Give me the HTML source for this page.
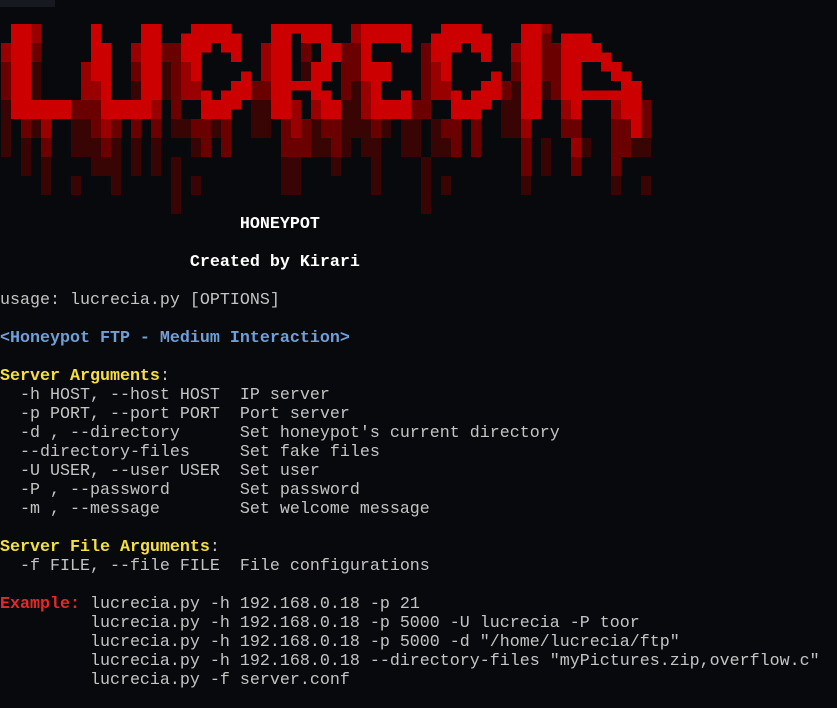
<!DOCTYPE html>
<html><head><meta charset="utf-8">
<style>
html,body{margin:0;padding:0;background:#08090c;width:837px;height:708px;overflow:hidden}
#logo{position:absolute;left:0;top:0}
#txt{position:absolute;left:0;top:215px;margin:0;font-family:"Liberation Mono","DejaVu Sans Mono",monospace;font-size:16.67px;line-height:19px;color:#c4c4c4;white-space:pre}
b{font-weight:bold}
.w{color:#ffffff}.bl{color:#6f9fd8}.y{color:#f5e040}.r{color:#e82828}
#tab{position:absolute;left:0;top:0;width:55px;height:7px;background:#161a20}
</style></head><body>
<div id="tab"></div>
<svg id="logo" width="837" height="230" xmlns="http://www.w3.org/2000/svg"></svg>
<pre id="txt">                        <b class="w">HONEYPOT</b>

                   <b class="w">Created by Kirari</b>

usage: lucrecia.py [OPTIONS]

<b class="bl">&lt;Honeypot FTP - Medium Interaction&gt;</b>

<b class="y">Server Arguments</b>:
  -h HOST, --host HOST  IP server
  -p PORT, --port PORT  Port server
  -d , --directory      Set honeypot's current directory
  --directory-files     Set fake files
  -U USER, --user USER  Set user
  -P , --password       Set password
  -m , --message        Set welcome message

<b class="y">Server File Arguments</b>:
  -f FILE, --file FILE  File configurations

<b class="r">Example:</b> lucrecia.py -h 192.168.0.18 -p 21
         lucrecia.py -h 192.168.0.18 -p 5000 -U lucrecia -P toor
         lucrecia.py -h 192.168.0.18 -p 5000 -d "/home/lucrecia/ftp"
         lucrecia.py -h 192.168.0.18 --directory-files "myPictures.zip,overflow.c"
         lucrecia.py -f server.conf</pre>
<script>
var C={R:"#cc0000",M:"#990000",D:"#6a0000",E:"#380404"};
var L=[
[0,2,3,"M"],[0,4,7,"D"],[0,8,13,"E"],
[2,10,11,"D"],[2,12,15,"E"],
[3,0,1,"M"],[3,2,3,"D"],[3,4,7,"E"],[3,10,11,"E"],
[4,10,11,"M"],[4,12,13,"D"],[4,14,17,"E"],
[7,8,9,"D"],[7,10,13,"E"],[7,16,17,"E"],
[8,4,7,"M"],[8,8,9,"D"],[8,10,13,"E"],
[9,6,7,"M"],[9,8,11,"D"],[9,12,15,"E"],
[10,10,11,"M"],[10,12,13,"D"],[10,14,15,"E"],
[11,10,11,"D"],[11,12,17,"E"],
[13,2,3,"M"],[13,4,5,"D"],[13,6,7,"E"],[13,10,11,"D"],[13,12,15,"E"],
[15,8,9,"M"],[15,10,11,"D"],[15,12,15,"E"],
[16,2,3,"D"],[16,4,7,"E"],
[17,2,9,"D"],[17,10,11,"E"],[17,14,19,"E"],
[18,4,5,"M"],[18,6,7,"M"],[18,10,11,"E"],
[19,6,7,"M"],[19,10,11,"D"],[19,12,13,"E"],[19,16,17,"E"],
[20,10,13,"D"],[21,10,11,"E"],[22,10,13,"D"],
[25,6,7,"D"],[25,8,11,"E"],
[26,2,5,"M"],[26,6,7,"D"],[26,8,11,"E"],
[28,10,13,"D"],[28,14,17,"E"],
[29,8,11,"M"],[29,12,13,"D"],[29,14,17,"E"],
[30,2,3,"D"],[30,4,5,"E"],[30,10,13,"D"],
[31,8,9,"M"],[31,10,13,"E"],
[32,10,11,"D"],[32,12,13,"E"],
[33,10,13,"D"],[33,14,15,"E"],
[34,2,7,"D"],[34,8,13,"E"],
[35,0,1,"M"],[35,2,5,"D"],[35,6,11,"E"],
[36,6,9,"M"],[36,10,13,"E"],
[37,10,11,"D"],[37,12,17,"E"],
[38,10,11,"E"],[40,10,13,"E"],
[41,8,9,"D"],[41,10,13,"E"],
[42,2,9,"D"],[42,14,19,"E"],
[43,4,5,"M"],[43,6,7,"M"],[43,10,13,"E"],
[44,6,7,"M"],[44,10,11,"D"],[44,12,13,"E"],[44,16,17,"E"],
[45,10,13,"D"],[47,10,13,"D"],
[50,6,7,"D"],[50,8,11,"E"],
[51,2,3,"M"],[51,4,5,"D"],[51,6,11,"E"],
[52,10,11,"M"],[52,12,15,"D"],[52,16,17,"E"],
[54,0,0,"M"],[54,1,5,"D"],[54,6,7,"E"],[54,12,15,"E"],
[55,2,7,"D"],
[56,8,9,"M"],[56,10,11,"D"],
[57,10,11,"D"],[57,12,13,"M"],[57,14,15,"D"],
[58,12,13,"E"],
[61,8,9,"M"],[61,10,15,"D"],[61,16,17,"E"],
[62,10,11,"D"],[62,12,13,"D"],
[63,12,13,"E"],
[64,8,11,"D"],[64,12,13,"E"],[64,16,17,"E"],
[1,0,9,"R"],[2,0,9,"R"],[3,8,9,"R"],[4,8,9,"R"],[5,8,9,"R"],[6,8,9,"R"],
[9,0,5,"R"],[10,2,9,"R"],[11,8,9,"R"],[12,8,9,"R"],[13,8,9,"R"],[14,0,9,"R"],[15,0,7,"R"]
];
function rows(base,spec,col){
 spec.forEach(function(row,r){row.forEach(function(c){L.push([base+c,r,r,col||"R"]);});});
}
var Cs=[[1,2,3,4],[0,1,2,3,4,5],[0,1,2,4,5],[0,1,5],[1],[1,6],[5,6],[2,4,5,6],[2,3,4,5],[2,3,4]];
rows(18,Cs);rows(43,Cs);
// R
rows(27,[[0,1,2,3,4,5],[0,1,3,4,5],[0,1,5,6],[0,1,5,6],[0,1,4,5],[0,1,4,5],[0,1,2,3,4],[0,1,4,5],[0,1,5,6],[0,1,5,6]]);
// E
rows(36,[[0,1,2,3,4],[0,1,2,3,4],[0,4],[0],[0,1,2],[0,1,2],[1],[1,4],[1,2,3,4],[1,2,3,4]]);
L.push([52,0,9,"R"]);L.push([53,0,9,"R"]);
// A
rows(56,[[],[0,1,2],[0,1,2,3],[0,1,2,3,4],[0,1,4,5],[0,1,5,6],[0,1,6,7],[0,1,2,3,4,5,6,7],[1,6,7],[1,6,7],[7],[7]]);
var s="";
L.forEach(function(q){var y1=24+q[1]*9.5,y2=24+(q[2]+1)*9.5;
 s+='<rect x="'+(1+10*q[0])+'" y="'+y1+'" width="10" height="'+(y2-y1)+'" fill="'+C[q[3]]+'"/>';});
document.getElementById("logo").innerHTML=s;
</script>
</body></html>
